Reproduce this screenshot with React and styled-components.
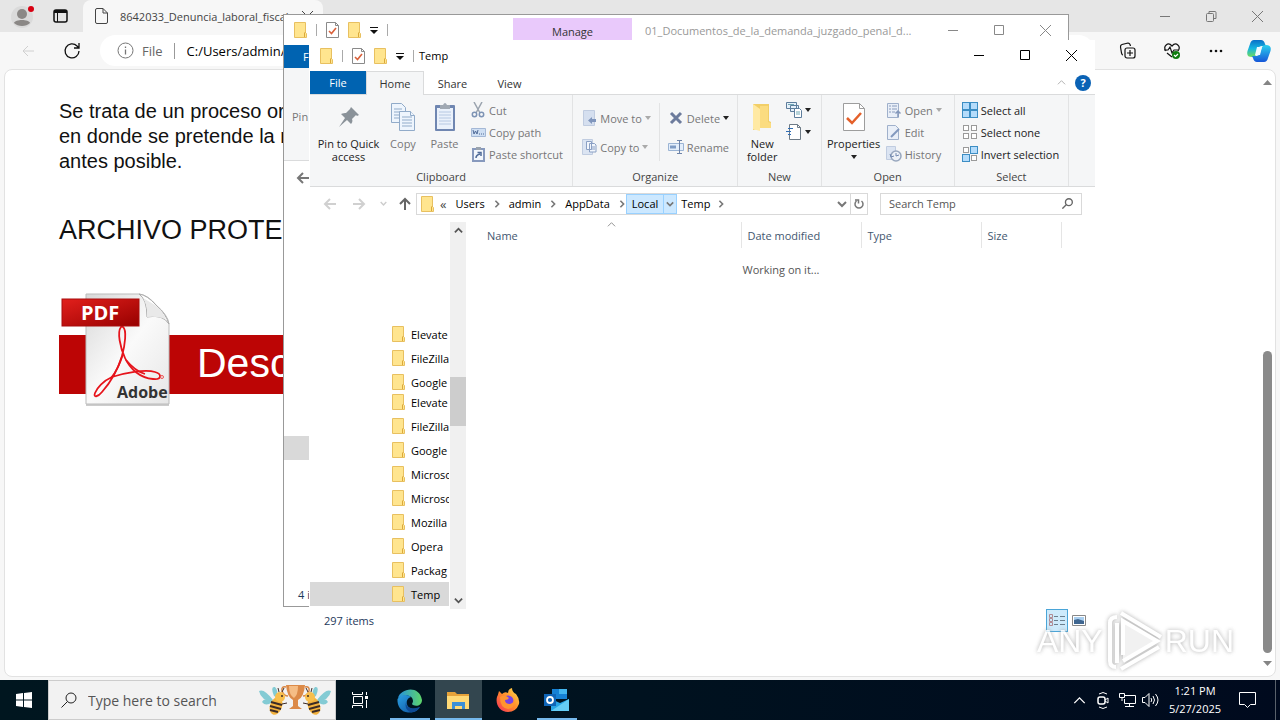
import React from 'react';
import styled, { createGlobalStyle } from 'styled-components';

const GlobalStyle = createGlobalStyle`
  * {
    box-sizing: border-box;
  }
  body {
    margin: 0;
    font-family: 'Open Sans', 'Noto Sans', sans-serif;
    font-size: 11px;
    color: #000;
  }
  button,
  input {
    font: inherit;
    color: inherit;
    border: none;
    background: none;
    margin: 0;
    padding: 0;
    outline: none;
  }
  svg {
    display: block;
    flex-shrink: 0;
  }
`;

// Small shared icons
const FolderIcon = ({ width = 13, height = 16 }) => (
  <svg width={width} height={height} viewBox="0 0 13 16" preserveAspectRatio="none">
    <path d="M.5.5h11v10l1 1v4h-12z" fill="#ffe58f" stroke="#e8c060" />
    <path d="M10.5 15v-4l1-1" fill="none" stroke="#dba93a" />
  </svg>
);

const CheckPageIcon = () => (
  <svg width="13" height="16" viewBox="0 0 13 16" fill="none">
    <path d="M.5.5h9l3 3v12H.5z" fill="#fff" stroke="#8a8a8a" />
    <path d="M9.5.5v3h3" stroke="#8a8a8a" />
    <path d="M3 9l2.500 2.500L10 6" stroke="#d9603a" strokeWidth="1.600" />
  </svg>
);

const DropIcon = ({ color = '#222' }) => (
  <svg width="6" height="4" viewBox="0 0 6 4">
    <path d="M0 0h6L3 4z" fill={color} />
  </svg>
);

const CustomizeIcon = () => (
  <svg width="8" height="8" viewBox="0 0 8 8">
    <path d="M0 1h8v1H0zM0 4h8L4 8z" fill="#111" />
  </svg>
);

const Chevron = ({ dir = 'down', color = '#555', size = 9, weight = 2 }) => {
  const paths = {
    down: 'M1 3l4 4 4-4',
    up: 'M1 7l4-4 4 4',
    right: 'M3 1l4 4-4 4',
  };
  return (
    <svg width={size} height={size} viewBox="0 0 10 10" fill="none">
      <path d={paths[dir]} stroke={color} strokeWidth={weight} />
    </svg>
  );
};

const Arrow = ({ turn = 0, color = '#d0d0d0', weight = 2 }) => (
  <svg width="14" height="14" viewBox="0 0 14 14" fill="none">
    <path
      d="M13 7H2M7 2L2 7l5 5"
      transform={`rotate(${turn} 7 7)`}
      stroke={color}
      strokeWidth={weight}
    />
  </svg>
);

const MinIcon = () => (
  <svg width="11" height="11" viewBox="0 0 11 11">
    <path d="M0 5.500h10" stroke="currentColor" />
  </svg>
);
const MaxIcon = () => (
  <svg width="11" height="11" viewBox="0 0 11 11">
    <path d="M.5.5h9v9h-9z" fill="none" stroke="currentColor" />
  </svg>
);
const RestoreIcon = () => (
  <svg width="11" height="11" viewBox="0 0 11 11" fill="none" stroke="currentColor">
    <rect x=".5" y="2.500" width="7" height="8" rx="1" />
    <path d="M3 2.500V.5h6q1 0 1 1v6H8" />
  </svg>
);
const CloseIcon = () => (
  <svg width="11" height="11" viewBox="0 0 11 11">
    <path d="M0 0l11 11M11 0L0 11" stroke="currentColor" />
  </svg>
);
const MagnifierIcon = ({ size, weight = 1 }) => (
  <svg width={size} height={size} viewBox="0 0 16 16" fill="none" stroke="currentColor" strokeWidth={weight}>
    <circle cx="10" cy="6" r="5" />
    <path d="M6.500 9.500L.5 15.500" />
  </svg>
);

// Browser icons
const ProfileIcon = () => (
  <svg width="26" height="26" viewBox="0 0 26 26">
    <circle cx="13" cy="14" r="11" fill="#dadada" />
    <circle cx="13" cy="11" r="5" fill="#8b8886" />
    <path d="M5 20c1-4 15-4 16 0-4 4-12 4-16 0z" fill="#8b8886" />
    <circle cx="22" cy="6" r="3" fill="#d80012" />
  </svg>
);
const WorkspaceIcon = () => (
  <svg width="15" height="14" viewBox="0 0 15 14" fill="none" stroke="#111">
    <rect x="1" y="1" width="13" height="12" rx="2" strokeWidth="1.500" />
    <path d="M1 2.500h13" strokeWidth="3" />
    <path d="M4.500 3v10" />
  </svg>
);
const PageIcon = () => (
  <svg width="13" height="16" viewBox="0 0 13 16" fill="none" stroke="#444">
    <path d="M2 .5h6l4.500 4.500v9q0 1.500-1.500 1.500H2Q.5 15.500.5 14V2Q.5.5 2 .5zM8 .5V5h4.500" />
  </svg>
);
const RefreshIcon = () => (
  <svg width="18" height="18" viewBox="0 0 18 18" fill="none" stroke="#111" strokeWidth="1.300">
    <path d="M16 9a7 7 0 1 1-2-5l2 2M16 1v5h-5" />
  </svg>
);
const InfoIcon = () => (
  <svg width="17" height="17" viewBox="0 0 17 17" fill="none" stroke="#777">
    <circle cx="8.500" cy="8.500" r="7.500" />
    <path d="M8.500 7.500v5M8.500 4.500V6" strokeWidth="1.300" />
  </svg>
);
const CollectionsIcon = () => (
  <svg width="18" height="18" viewBox="0 0 18 18" fill="none" stroke="#111" strokeWidth="1.200">
    <rect x="6" y="6" width="10" height="10" rx="2" />
    <path d="M11 8v6M8 11h6M4 13q-1 0-1.500-2L1.500 5Q1.300 3 3 2.500L9 1q2 0 2.500 3" />
  </svg>
);
const HealthIcon = () => (
  <svg width="18" height="18" viewBox="0 0 18 18" fill="none" stroke="#111" strokeWidth="1.200">
    <path d="M3 9C-.5 4 5-.5 9 4c4-4.500 9.500 0 6 5M4 11l5 4M1 8h4l2-3 2 6 2-3h5" />
    <circle cx="13" cy="13" r="4" fill="#107c10" stroke="none" />
    <path d="M11 13l1.500 1.500L15 12" stroke="#fff" />
  </svg>
);
const MoreIcon = () => (
  <svg width="14" height="4" viewBox="0 0 14 4" fill="#111">
    <circle cx="2" cy="2" r="1.300" />
    <circle cx="7" cy="2" r="1.300" />
    <circle cx="12" cy="2" r="1.300" />
  </svg>
);
const CopilotIcon = () => (
  <svg width="24" height="22" viewBox="0 0 24 22">
    <defs>
      <linearGradient id="copA" x1="0" y1="0" x2="0" y2="1">
        <stop offset="0" stopColor="#0a6fc8" />
        <stop offset=".5" stopColor="#16b5e0" />
        <stop offset="1" stopColor="#6fdc5c" />
      </linearGradient>
      <linearGradient id="copB" x1="0" y1="0" x2="0" y2="1">
        <stop offset="0" stopColor="#2ad0ee" />
        <stop offset="1" stopColor="#1556d8" />
      </linearGradient>
    </defs>
    <path d="M7 0h7q3 0 4 4l1 2h-4q-3 0-4 3l-2 6q-1 2-4 2-6 0-4.500-6L3 4q1-4 4-4z" fill="url(#copA)" />
    <path d="M17 22h-7q-3 0-4-4l-1-2h4q3 0 4-3l2-6q1-2 4-2 6 0 4.500 6L21 18q-1 4-4 4z" fill="url(#copB)" />
    <path d="M10 7h5l-2 8H8z" fill="#eefaff" />
  </svg>
);

const PdfArt = () => (
  <svg width="114" height="114" viewBox="0 0 114 114">
    <defs>
      <linearGradient id="sheet" x1="0" y1="0" x2="1" y2="1">
        <stop offset="0" stopColor="#d8d8d8" />
        <stop offset=".5" stopColor="#fafafa" />
        <stop offset="1" stopColor="#e6e6e6" />
      </linearGradient>
      <linearGradient id="label" x1="0" y1="0" x2="1" y2="1">
        <stop offset="0" stopColor="#e2201c" />
        <stop offset="1" stopColor="#970000" />
      </linearGradient>
    </defs>
    <path d="M27 3h53q10 0 19 12 11 10 11 20v79H27z" fill="#999" opacity=".5" />
    <path d="M27 2h53q9 1 17 11 12 10 13 19v80H27z" fill="url(#sheet)" stroke="#bbb" />
    <path d="M80 2q8 5 8 23 16-3 22 7-3-10-13-19Q88 3 80 2z" fill="#fff" stroke="#aaa" />
    <path d="M84 6q5 8 4 19 14-1 19 3-2-8-11-15" fill="#e9e9e9" />
    <g fill="none" stroke="#e6141c" strokeWidth="1.800">
      <path d="M62 35c-4 5-1 20 4 31s15 20 28 21c9 1 9-5 2-7-10-3-31 1-43 5-9 4-15 11-17 16-2 5 3 4 7-1 8-9 16-23 20-36 3-11 5-26 1-29q-1-1-2 0z" />
      <path d="M64 62q-5 16-12 24M67 68q9 11 19 14" />
    </g>
    <rect x="3" y="7" width="77" height="27" fill="url(#label)" stroke="#a80c0c" />
    <text x="22" y="28" fill="#fff" fontFamily="Open Sans" fontWeight="700" fontSize="20">PDF</text>
    <text x="58" y="106" fill="#333" fontFamily="Open Sans" fontWeight="700" fontSize="16">Adobe</text>
    <circle cx="103" cy="85" r="1.500" fill="none" stroke="#e55" />
  </svg>
);

// Ribbon icons
const PinIcon = () => (
  <svg width="22" height="22" viewBox="0 0 22 22" fill="#8a9299">
    <path d="M13 1l8 8-2 1-1-1-4 4c1 2 0 4-1 5l-4-4-8 7 6-9-4-4c2-1 4-1 5-1l4-4z" />
  </svg>
);
const CopyIcon = ({ size = 28 }) => (
  <svg width={size} height={size} viewBox="0 0 28 28" fill="#eef5fd" stroke="#91abc9">
    <path d="M2.500.5h10l4 4v15h-14z" />
    <path d="M5 6h8M5 9h8M5 12h8M5 15h8" />
    <path d="M10.500 8.500h11l4 4v15h-15z" />
    <path d="M21.500 8.500v4h4M13 14h10M13 17h10M13 20h10M13 23h10" />
  </svg>
);
const CopyToIcon = () => (
  <svg width="15" height="16" viewBox="0 0 15 16">
    <path d="M.5.5h10v15H.5z" fill="#dbe4f2" stroke="#c0cce0" />
    <path d="M4.500 2.500h5v8h-5zM7.500 4.500h5l1.500 1.500v7H7.500z" fill="#f2f6fc" stroke="#8ba0c4" />
    <path d="M9 8h4M9 10h4" stroke="#8ba0c4" />
  </svg>
);
const PasteIcon = () => (
  <svg width="22" height="30" viewBox="0 0 22 30">
    <rect x="1" y="3" width="20" height="26" rx="1" fill="#6f86b1" />
    <path d="M3 6h16v21H3z" fill="#eaf1fb" />
    <path d="M5 10h12M5 13h12M5 16h12M5 19h12M5 22h12" stroke="#b6c8e2" />
    <path d="M6 3h3q2-4 4 0h3v4H6z" fill="#a0a8b2" />
  </svg>
);
const CutIcon = () => (
  <svg width="14" height="16" viewBox="0 0 14 16" fill="none" stroke="#7d93b4" strokeWidth="1.500">
    <path d="M3 0l6 11M11 0L5 11" stroke="#9aa3ae" />
    <circle cx="3.500" cy="12.500" r="2.200" />
    <circle cx="10.500" cy="12.500" r="2.200" />
  </svg>
);
const CopyPathIcon = () => (
  <svg width="15" height="9" viewBox="0 0 15 9" fill="none">
    <path d="M.5.5h14v8H.5z" fill="#cfdff3" stroke="#a4b8d6" />
    <path d="M2 2l1 4 1.500-3L6 6l1-4M8 6h1M10 6h1M12 6h1" stroke="#4f6a97" />
  </svg>
);
const ShortcutIcon = () => (
  <svg width="13" height="15" viewBox="0 0 13 15" fill="none">
    <path d="M1 2h11v12H1z" fill="#f2f6fc" stroke="#8799bd" strokeWidth="2" />
    <path d="M4 0h5v3H4z" fill="#9aa3ae" />
    <path d="M4 11q0-3 4-4M5.500 5.500H9V9" stroke="#4f6a97" strokeWidth="1.500" />
  </svg>
);
const MoveIcon = () => (
  <svg width="13" height="16" viewBox="0 0 13 16">
    <path d="M.5.5h11v15H.5z" fill="#d5dfef" stroke="#c0cce0" />
    <path d="M13 9v3H9v2l-4-3.500L9 7v2z" fill="#8096bd" />
  </svg>
);
const DeleteIcon = () => (
  <svg width="14" height="14" viewBox="0 0 14 14">
    <path d="M2 2l10 10M12 2L2 12" stroke="#6c7b9c" strokeWidth="3" />
  </svg>
);
const RenameIcon = () => (
  <svg width="16" height="14" viewBox="0 0 16 14" fill="none">
    <path d="M.5 3.500h15v7H.5z" fill="#e3eefb" stroke="#9bb4d4" />
    <path d="M2 5.500h6v3H2z" fill="#7f9cc5" />
    <path d="M9 .5h5M9 13.500h5M11.500 0v14" stroke="#6d83a8" />
  </svg>
);
const BigFolderIcon = () => (
  <svg width="20" height="28" viewBox="0 0 20 28">
    <path d="M1 1h16v17l2 1v6H8L1 27z" fill="#f2cf68" />
    <path d="M1 1l7 5v22L1 26z" fill="#ffe9a3" />
    <path d="M8 3h8v16l3 1v5H8z" fill="#fbdc80" />
  </svg>
);
const NewItemIcon = () => (
  <svg width="16" height="16" viewBox="0 0 16 16" fill="#e6f1fa" stroke="#5d7d9c">
    <path d="M.5.5h10v6H.5zM4.500 3.500h8v6h-8z" />
    <path d="M8.500 6.500h5l2 2v7h-7z" fill="#fff" />
    <path d="M10 10h4M10 12h4M2 2.500h6" stroke="#6fa7b4" />
  </svg>
);
const EasyAccessIcon = () => (
  <svg width="16" height="16" viewBox="0 0 16 16" fill="none" stroke="#6d7a86">
    <path d="M3.500.5h8l3 3v12h-11z" fill="#fff" />
    <path d="M11.500.5v3h3" />
    <path d="M2 4.500h5M0 7.500h5M2 10.500h3" stroke="#2f6db5" strokeWidth="1.200" />
  </svg>
);
const PropertiesIcon = () => (
  <svg width="22" height="28" viewBox="0 0 22 28" fill="none">
    <path d="M.5.5h16l5 5v22H.5z" fill="#fff" stroke="#9d9d9d" />
    <path d="M16.500.5v5h5" stroke="#9d9d9d" />
    <path d="M4 15l5 5L18 10" stroke="#e4602a" strokeWidth="2.500" />
  </svg>
);
const OpenIcon = () => (
  <svg width="14" height="15" viewBox="0 0 14 15" fill="none">
    <path d="M.5.5h11v14H.5z" fill="#e9eff8" stroke="#9fb0cb" />
    <path d="M2 3h2M2 6h2M2 9h2M5 3h5M5 6h5M5 9h3" stroke="#8a9cbd" />
    <path d="M11 14V8M8.500 10.500L11 8l2.500 2.500" stroke="#8498bb" strokeWidth="1.500" />
  </svg>
);
const EditIcon = () => (
  <svg width="13" height="15" viewBox="0 0 13 15" fill="none">
    <path d="M.5.5h8l3 3v11H.5z" fill="#e9eff8" stroke="#9fb0cb" />
    <path d="M4 12l8-8" stroke="#8298be" strokeWidth="2" />
  </svg>
);
const HistoryIcon = () => (
  <svg width="16" height="16" viewBox="0 0 16 16" fill="none">
    <path d="M.5.5h9v13h-9z" fill="#dbe4f2" stroke="#c0cce0" />
    <circle cx="10" cy="10" r="5" fill="#edf1f7" stroke="#98a7be" strokeWidth="1.500" />
    <path d="M10 7v3l3-1M4 8l1 3 3-1" stroke="#7188b0" />
  </svg>
);
const squares = [[0, 0], [8, 0], [0, 8], [8, 8]];
const SelectIcon = ({ on = [] }) => (
  <svg width="16" height="16" viewBox="0 0 16 16">
    {squares.map(([x, y], i) =>
      on.includes(i) ? (
        <rect key={i} x={x + 0.5} y={y + 0.5} width="7" height="7" fill="#b5dcfb" stroke="#3d8ec4" />
      ) : (
        <rect key={i} x={x + 1.5} y={y + 1.5} width="5" height="5" fill="#fff" stroke="#9a9a9a" />
      )
    )}
  </svg>
);

// Taskbar icons
const StartIcon = () => (
  <svg width="16" height="16" viewBox="0 0 16 16" fill="#fff">
    <path d="M0 2l7-1v6.500H0zM8 1l8-1v7.500H8zM0 8.500h7V15l-7-1zM8 8.500h8V16l-8-1z" />
  </svg>
);
const BeesIcon = () => (
  <svg width="72" height="32" viewBox="0 0 72 32">
    <path d="M27 1h19q-1 12-7 15v6l4 3H30l4-3v-6q-6-3-7-15z" fill="#dc8a48" />
    <path d="M30 2h9q0 9-4 12-5-3-5-12z" fill="#f5bd85" />
    <path d="M27 3q-5-1-4 4 2 5 6 5M46 3q5-1 4 4-2 5-6 5" fill="none" stroke="#d98745" strokeWidth="1.500" />
    {[false, true].map((flip) => (
      <g key={String(flip)} transform={flip ? 'translate(72) scale(-1 1)' : undefined}>
        <path d="M14 16Q5 4 0 7q2 10 14 10zM13 17Q5 13 3 18q4 5 10 0zM15 12Q11 2 16 3q4 4 1 10z" fill="#83cbd4" />
        <ellipse cx="17" cy="22" rx="6" ry="9" transform="rotate(20 17 22)" fill="#f3b23d" />
        <path d="M12 18l11 3M11 22l11 3M11 26l8 2" stroke="#3c2b25" strokeWidth="2" />
        <circle cx="21" cy="13" r="5" fill="#f8bf4d" />
        <circle cx="23" cy="12" r="1" fill="#3c2b25" />
        <path d="M20 8l-1-4M23 8l2-4M23 20l5-1" stroke="#3c2b25" />
      </g>
    ))}
  </svg>
);
const TaskViewIcon = () => (
  <svg width="17" height="16" viewBox="0 0 17 16" fill="none" stroke="#fff">
    <path d="M.5 0v2.500h10V0M.5 16v-2.500h10V16M1.500 4.500h9v7h-9zM14.500 0v3M14.500 8v8" />
    <path d="M13 4h3v3h-3z" fill="#fff" stroke="none" />
  </svg>
);
const EdgeIcon = () => (
  <svg width="25" height="25" viewBox="0 0 25 25">
    <defs>
      <linearGradient id="edgeTop" x1="0" x2="1">
        <stop offset="0" stopColor="#2591dc" />
        <stop offset="1" stopColor="#5ed66a" />
      </linearGradient>
      <linearGradient id="edgeLow" x1="0" x2="1" y2="1">
        <stop offset="0" stopColor="#2ba0e2" />
        <stop offset="1" stopColor="#0c4f9c" />
      </linearGradient>
    </defs>
    <path d="M1 10C3 1 22-4 25 12c0 5-5 7-9 5-2-1 0-2 0-4 0-5-6-8-15-3z" fill="url(#edgeTop)" />
    <path d="M.5 11C4 6 11 6 14 9c-5 1-6 8-1 11 4 2 7 1 10-1-3 5-8 6-12 5.500C4 24 0 18 .5 11z" fill="url(#edgeLow)" />
    <path d="M9 14q0 9 14 5-4 6-10 5-6-3-4-10z" fill="#0e4a94" />
  </svg>
);
const ExplorerIcon = () => (
  <svg width="23" height="19" viewBox="0 0 23 19">
    <path d="M0 1h8l2 2h12v15H0z" fill="#e6a23a" />
    <path d="M0 5h22v13H0z" fill="#ffd976" />
    <path d="M5 11h13v7h-3v-3H8v3H5z" fill="#3b8fd6" />
  </svg>
);
const FirefoxIcon = () => (
  <svg width="24" height="24" viewBox="0 0 24 24">
    <defs>
      <linearGradient id="fox" x1="1" y1="0" x2="0" y2="1">
        <stop offset="0" stopColor="#ffe14d" />
        <stop offset=".5" stopColor="#ff8a2b" />
        <stop offset="1" stopColor="#f52a5d" />
      </linearGradient>
    </defs>
    <path d="M3 3l3 3q3-3 6-1 0-4 4-5 0 4 4 6 4 5 3 10-3 8-11 8C4 24-1 16 1 9q1-2 2-6z" fill="url(#fox)" />
    <circle cx="12" cy="13" r="5.500" fill="#7542e5" />
    <path d="M4 9q5-3 9 1-1 2-4 2 0 4 5 4 4-1 4-5 2 9-6 10-8-1-8-12z" fill="#ff9430" />
  </svg>
);
const OutlookIcon = () => (
  <svg width="25" height="22" viewBox="0 0 25 22">
    <path d="M8 0h15v10H8z" fill="#1681d4" />
    <path d="M15 0h8v5h-8z" fill="#43b5ee" />
    <path d="M7 10l9 4 9-4v12H7z" fill="#28a5e5" />
    <path d="M7 22l18-12v12z" fill="#65cdf5" />
    <path d="M0 5h12v12H0z" fill="#0f65b7" />
    <circle cx="6" cy="11" r="3" fill="none" stroke="#fff" strokeWidth="1.800" />
  </svg>
);
const MeetIcon = () => (
  <svg width="12" height="17" viewBox="0 0 12 17" fill="none" stroke="#fff">
    <rect x="1" y="5" width="7" height="7" rx="2" strokeWidth="1.500" />
    <path d="M8 8l3-2v5L8 9M2 2q4-3 8 0M2 15q4 3 8 0" />
  </svg>
);
const NetworkIcon = () => (
  <svg width="17" height="14" viewBox="0 0 17 14" fill="none" stroke="#fff">
    <path d="M5 2.500h11.500v8h-11V6M.5.5h5v4h-5zM3 5v3M10.500 11v2.500M6 13.500h9" />
  </svg>
);
const VolumeIcon = () => (
  <svg width="18" height="14" viewBox="0 0 18 14" fill="none" stroke="#fff">
    <path d="M.5 4.500H3l4-4v13l-4-4H.5zM9 5q1.500 2 0 4M11 3q3 4 0 8M13.500 1q5 6 0 12" />
  </svg>
);
const NoticeIcon = () => (
  <svg width="17" height="16" viewBox="0 0 17 16" fill="none" stroke="#fff">
    <path d="M.5.5h16v12h-5l-3 3-3-3h-5z" />
  </svg>
);

const WindowControls = ({ restore, ...rest }) => (
  <Controls {...rest}>
    <ControlButton aria-label="Minimize"><MinIcon /></ControlButton>
    <ControlButton aria-label="Maximize">{restore ? <RestoreIcon /> : <MaxIcon />}</ControlButton>
    <ControlButton aria-label="Close"><CloseIcon /></ControlButton>
  </Controls>
);

const QuickAccess = () => (
  <QuickBar>
    <FolderIcon />
    <QuickLine />
    <QuickButton aria-label="Properties"><CheckPageIcon /></QuickButton>
    <QuickButton aria-label="New folder"><FolderIcon /></QuickButton>
    <QuickButton aria-label="Customize"><CustomizeIcon /></QuickButton>
    <QuickLine />
  </QuickBar>
);

const Small = ({ icon, children, drop, dim, dropColor = '#aaa' }) => (
  <SmallButton $dim={dim}>
    <SmallGlyph>{icon}</SmallGlyph>
    {children}
    {drop && <DropIcon color={dropColor} />}
  </SmallButton>
);

function Browser() {
  return (
    <BrowserFrame>
      <TabStrip>
        <StripButton aria-label="Profile"><ProfileIcon /></StripButton>
        <StripButton aria-label="Workspaces"><WorkspaceIcon /></StripButton>
        <Tab>
          <PageIcon />
          <TabTitle>8642033_Denuncia_laboral_fiscal</TabTitle>
          <CloseIcon />
        </Tab>
        <WindowControls restore $color="#777" />
      </TabStrip>
      <Toolbar>
        <ToolButton aria-label="Back"><Arrow weight={1} /></ToolButton>
        <ToolButton aria-label="Refresh"><RefreshIcon /></ToolButton>
        <AddressPill>
          <InfoIcon />
          <Scheme>File</Scheme>
          <AddressInput aria-label="Address" defaultValue="C:/Users/admin/" />
        </AddressPill>
        <ToolButton aria-label="Collections"><CollectionsIcon /></ToolButton>
        <ToolButton aria-label="Browser essentials"><HealthIcon /></ToolButton>
        <ToolButton aria-label="More"><MoreIcon /></ToolButton>
        <ToolButton aria-label="Copilot"><CopilotIcon /></ToolButton>
      </Toolbar>
      <PageCard>
        <Article>
          <Paragraph>
            Se trata de un proceso or<br />
            en donde se pretende la r<br />
            antes posible.
          </Paragraph>
          <Heading>ARCHIVO PROTE</Heading>
          <Banner href="#">
            <PdfArt />
            <span>Desc</span>
          </Banner>
        </Article>
        <PageScroll>
          <svg width="9" height="5" viewBox="0 0 9 5"><path d="M0 5h9L4.500 0z" fill="#858585" /></svg>
          <PageThumb />
          <svg width="9" height="5" viewBox="0 0 9 5"><path d="M0 0h9L4.500 5z" fill="#858585" /></svg>
        </PageScroll>
      </PageCard>
    </BrowserFrame>
  );
}

function BackWindow() {
  return (
    <BackFrame>
      <BackTitle>
        <QuickAccess />
        <ManageTab>Manage</ManageTab>
        <BackCaption>01_Documentos_de_la_demanda_juzgado_penal_d...</BackCaption>
        <WindowControls $color="#888" />
      </BackTitle>
      <BackFileTab>F</BackFileTab>
      <BackRibbon>Pin</BackRibbon>
      <BackNav><Arrow color="#777" /></BackNav>
      <BackBody><BackSelected /></BackBody>
      <BackStatus>4 i</BackStatus>
    </BackFrame>
  );
}

function Ribbon() {
  return (
    <RibbonBar>
      <Group $grow={264}>
        <GroupBody>
          <BigButton $width={77}><BigGlyph><PinIcon /></BigGlyph>Pin to Quick<br />access</BigButton>
          <BigButton $width={32} $dim><BigGlyph><CopyIcon /></BigGlyph>Copy</BigButton>
          <BigButton $width={51} $dim><BigGlyph><PasteIcon /></BigGlyph>Paste</BigButton>
          <Stack>
            <Small dim icon={<CutIcon />}>Cut</Small>
            <Small dim icon={<CopyPathIcon />}>Copy path</Small>
            <Small dim icon={<ShortcutIcon />}>Paste shortcut</Small>
          </Stack>
        </GroupBody>
        <GroupLabel>Clipboard</GroupLabel>
      </Group>
      <Group $grow={165}>
        <GroupBody $inset={8}>
          <Stack $tall>
            <Small dim drop icon={<MoveIcon />}>Move to</Small>
            <Small dim drop icon={<CopyToIcon />}>Copy to</Small>
          </Stack>
          <InnerLine />
          <Stack $tall>
            <Small dim drop dropColor="#222" icon={<DeleteIcon />}>Delete</Small>
            <Small dim icon={<RenameIcon />}>Rename</Small>
          </Stack>
        </GroupBody>
        <GroupLabel>Organize</GroupLabel>
      </Group>
      <Group $grow={83}>
        <GroupBody>
          <BigButton $width={48}><BigGlyph><BigFolderIcon /></BigGlyph>New<br />folder</BigButton>
          <Stack>
            <SmallButton aria-label="New item"><NewItemIcon /><DropIcon /></SmallButton>
            <SmallButton aria-label="Easy access"><EasyAccessIcon /><DropIcon /></SmallButton>
          </Stack>
        </GroupBody>
        <GroupLabel>New</GroupLabel>
      </Group>
      <Group $grow={133}>
        <GroupBody>
          <BigButton $width={64}><BigGlyph><PropertiesIcon /></BigGlyph>Properties<DropRow><DropIcon /></DropRow></BigButton>
          <Stack>
            <Small dim drop icon={<OpenIcon />}>Open</Small>
            <Small dim icon={<EditIcon />}>Edit</Small>
            <Small dim icon={<HistoryIcon />}>History</Small>
          </Stack>
        </GroupBody>
        <GroupLabel>Open</GroupLabel>
      </Group>
      <Group $grow={114}>
        <GroupBody $inset={7}>
          <Stack>
            <Small icon={<SelectIcon on={[0, 1, 2, 3]} />}>Select all</Small>
            <Small icon={<SelectIcon />}>Select none</Small>
            <Small icon={<SelectIcon on={[1, 2]} />}>Invert selection</Small>
          </Stack>
        </GroupBody>
        <GroupLabel>Select</GroupLabel>
      </Group>
    </RibbonBar>
  );
}

const folders = ['Elevate', 'FileZilla', 'Google', 'Microso', 'Microso', 'Mozilla', 'Opera', 'Packag', 'Temp'];

const FolderRow = ({ name }) => (
  <TreeItem $active={name === 'Temp'}>
    <FolderIcon />
    {name}
  </TreeItem>
);

function FrontWindow() {
  return (
    <FrontFrame>
      <FrontTitle>
        <QuickAccess />
        <FrontCaption>Temp</FrontCaption>
        <WindowControls $color="#000" />
      </FrontTitle>
      <RibbonTabs>
        <FileTab>File</FileTab>
        <RibbonTab $active>Home</RibbonTab>
        <RibbonTab>Share</RibbonTab>
        <RibbonTab>View</RibbonTab>
        <TabTools>
          <Chevron dir="up" color="#aaa" weight={1} />
          <HelpButton aria-label="Help">?</HelpButton>
        </TabTools>
      </RibbonTabs>
      <Ribbon />
      <AddressRow>
        <NavButton aria-label="Back"><Arrow /></NavButton>
        <NavButton aria-label="Forward"><Arrow turn={180} /></NavButton>
        <NavButton aria-label="Recent" $narrow><Chevron color="#ccc" size={7} /></NavButton>
        <NavButton aria-label="Up" $narrow><Arrow turn={90} color="#666" /></NavButton>
        <PathBox>
          <FolderIcon />
          <Guillemet>«</Guillemet>
          <Crumb>Users</Crumb>
          <Chevron dir="right" color="#777" size={8} />
          <Crumb>admin</Crumb>
          <Chevron dir="right" color="#777" size={8} />
          <Crumb>AppData</Crumb>
          <Chevron dir="right" color="#777" size={8} />
          <LocalCrumb>
            <span>Local</span>
            <i><Chevron color="#777" size={8} /></i>
          </LocalCrumb>
          <TempCrumb>Temp</TempCrumb>
          <Chevron dir="right" color="#777" size={8} />
          <PathEnd>
            <Chevron color="#777" size={10} />
            <RefreshCell aria-label="Refresh">
              <svg width="12" height="12" viewBox="0 0 12 12" fill="none" stroke="#777" strokeWidth="1.500">
                <path d="M3.500 3a4 4 0 1 0 5 0M2 2h3.500v3.500" />
              </svg>
            </RefreshCell>
          </PathEnd>
        </PathBox>
        <SearchBox>
          <SearchInput aria-label="Search" placeholder="Search Temp" />
          <MagnifierIcon size={11} weight={2} />
        </SearchBox>
      </AddressRow>
      <Panes>
        <Tree>
          <TreeTop>
            {folders.slice(0, 3).map((name) => <FolderRow key={name} name={name} />)}
          </TreeTop>
          {folders.map((name, i) => <FolderRow key={i} name={name} />)}
        </Tree>
        <TreeScroll>
          <Chevron dir="up" />
          <TreeThumb />
          <Chevron />
        </TreeScroll>
        <Listing>
          <Files>
            <thead>
              <tr>
                <NameHead><HeadMark><Chevron dir="up" color="#888" weight={1} /></HeadMark>Name</NameHead>
                <Head $width={120}>Date modified</Head>
                <Head $width={120}>Type</Head>
                <Head $width={80}>Size</Head>
                <Spacer />
              </tr>
            </thead>
            <tbody>
              <tr><Working colSpan={5}>Working on it...</Working></tr>
            </tbody>
          </Files>
        </Listing>
      </Panes>
      <StatusBar>
        297 items
        <Views>
          <ViewButton $active aria-label="Details">
            <svg width="18" height="13" viewBox="0 0 18 13" fill="none">
              <path d="M1.500.5h3v3h-3zM1.500 4.500h3v3h-3zM1.500 8.500h3v3h-3z" stroke="#b08a92" />
              <path d="M6 2.500h4M6 6.500h4M6 10.500h4M12 2.500h5M12 6.500h5M12 10.500h5" stroke="#6b7f8e" />
            </svg>
          </ViewButton>
          <ViewButton aria-label="Large icons">
            <svg width="14" height="11" viewBox="0 0 14 11">
              <path d="M.5.5h13v10H.5z" fill="#fff" stroke="#888" />
              <path d="M2 2h10v4H2z" fill="#a9cff0" />
              <path d="M2 5l4-1 6 2v3H2z" fill="#3f6690" />
            </svg>
          </ViewButton>
        </Views>
      </StatusBar>
    </FrontFrame>
  );
}

function Watermark() {
  return (
    <Mark>
      <span>ANY</span>
      <svg width="62" height="64" viewBox="0 0 62 64" fill="none" stroke="#fff" strokeWidth="4">
        <path d="M20 12l34 20-34 20z" fill="#eee" stroke="none" />
        <path d="M14 8q-7 0-7 6v38q0 6 6 6M14 14v40M20 46V12l34 20-34 20M18 4l40 24M18 60l38-22" />
      </svg>
      <span>RUN</span>
    </Mark>
  );
}

function Taskbar() {
  return (
    <Bar>
      <StartButton aria-label="Start"><StartIcon /></StartButton>
      <TaskSearch>
        <MagnifierIcon size={16} />
        <SearchInput aria-label="Type here to search" placeholder="Type here to search" />
        <BeesIcon />
      </TaskSearch>
      <TaskButton aria-label="Task view"><TaskViewIcon /></TaskButton>
      <TaskButton aria-label="Edge" $line={40}><EdgeIcon /></TaskButton>
      <TaskButton aria-label="File Explorer" $line={47} $active><ExplorerIcon /></TaskButton>
      <TaskButton aria-label="Firefox"><FirefoxIcon /></TaskButton>
      <TaskButton aria-label="Outlook" $line={40}><OutlookIcon /></TaskButton>
      <Tray>
        <TrayButton aria-label="Hidden icons"><Chevron dir="up" color="#fff" size={13} weight={1} /></TrayButton>
        <TrayButton aria-label="Meet now"><MeetIcon /></TrayButton>
        <TrayButton aria-label="Network"><NetworkIcon /></TrayButton>
        <TrayButton aria-label="Volume"><VolumeIcon /></TrayButton>
        <Clock>1:21 PM<br />5/27/2025</Clock>
        <NoticeButton aria-label="Notifications"><NoticeIcon /></NoticeButton>
        <ShowDesktop aria-label="Show desktop" />
      </Tray>
    </Bar>
  );
}

function App() {
  return (
    <Desktop>
      <GlobalStyle />
      <Browser />
      <BackWindow />
      <FrontWindow />
      <Watermark />
      <Taskbar />
    </Desktop>
  );
}

export default App;

// Styling
const Desktop = styled.div`
  position: relative;
  display: flex;
  flex-direction: column;
  min-height: 100vh;
  overflow: hidden;
`;

// Browser
const BrowserFrame = styled.main`
  flex: 1;
  display: flex;
  flex-direction: column;
  background: #f7f7f7;
`;
const TabStrip = styled.div`
  display: flex;
  align-items: center;
  height: 32px;
  padding-left: 3px;
  background: #e6e6e6;
`;
const StripButton = styled.button`
  display: flex;
  align-items: center;
  justify-content: center;
  width: 38px;
  height: 32px;
`;
const Tab = styled.div`
  display: flex;
  align-items: center;
  gap: 12px;
  width: 240px;
  height: 32px;
  margin-left: 4px;
  padding: 0 10px 0 12px;
  border-radius: 8px 8px 0 0;
  background: #f7f7f7;
  color: #444;
`;
const TabTitle = styled.span`
  flex: 1;
  overflow: hidden;
  white-space: nowrap;
`;
const Controls = styled.div`
  display: flex;
  margin-left: auto;
  color: ${(p) => p.$color};
`;
const ControlButton = styled.button`
  display: flex;
  align-items: center;
  justify-content: center;
  width: 46px;
  height: 30px;
`;
const Toolbar = styled.div`
  display: flex;
  align-items: center;
  height: 37px;
  padding-left: 6px;
`;
const ToolButton = styled.button`
  display: flex;
  align-items: center;
  justify-content: center;
  width: 44px;
  height: 30px;
  &:last-child {
    width: 42px;
  }
`;
const AddressPill = styled.div`
  flex: 1;
  display: flex;
  align-items: center;
  gap: 8px;
  height: 31px;
  margin: 0 12px 0 6px;
  padding-left: 17px;
  border-radius: 16px;
  background: #fff;
  font-size: 13px;
`;
const Scheme = styled.span`
  padding-right: 11px;
  border-right: 1px solid #999;
  line-height: 16px;
  color: #666;
`;
const AddressInput = styled.input`
  flex: 1;
  padding-left: 4px;
`;
const PageCard = styled.section`
  flex: 1;
  display: flex;
  justify-content: space-between;
  margin: 0 4px 3px;
  border: 1px solid #e2e2e2;
  border-radius: 8px;
  background: #fff;
`;
const Article = styled.article`
  padding: 29px 0 0 54px;
  font-family: 'Liberation Sans', sans-serif;
  color: #111;
`;
const Paragraph = styled.p`
  margin: 0;
  font-size: 20px;
  line-height: 25px;
`;
const Heading = styled.h1`
  margin: 40px 0 0;
  font-size: 27px;
  font-weight: 400;
  line-height: 32px;
`;
const Banner = styled.a`
  display: flex;
  align-items: center;
  gap: 24px;
  height: 114px;
  margin-top: 46px;
  padding-top: 28px;
  background: linear-gradient(transparent 43px, #bc0505 43px, #bc0505 102px, transparent 102px);
  color: #fff;
  font-size: 41px;
  text-decoration: none;
  svg {
    margin-top: -28px;
  }
`;
const PageScroll = styled.div`
  display: flex;
  flex-direction: column;
  align-items: center;
  justify-content: space-between;
  width: 15px;
  padding: 10px 0;
`;
const PageThumb = styled.div`
  width: 9px;
  height: 302px;
  margin: auto 0 8px;
  border-radius: 5px;
  background: #8a8a8a;
`;

// Window placed behind
const BackFrame = styled.section`
  position: absolute;
  left: 283px;
  top: 14px;
  display: flex;
  flex-direction: column;
  width: 786px;
  height: 593px;
  border: 1px solid #999;
  background: #fff;
`;
const BackTitle = styled.div`
  display: flex;
  align-items: center;
  height: 30px;
  padding-left: 10px;
`;
const QuickBar = styled.div`
  display: flex;
  align-items: center;
  gap: 9px;
`;
const QuickLine = styled.span`
  width: 1px;
  height: 12px;
  background: #aaa;
`;
const QuickButton = styled.button`
  display: flex;
`;
const ManageTab = styled.div`
  width: 119px;
  height: 24px;
  margin-left: 125px;
  padding-top: 4px;
  background: #e9c9fb;
  color: #333;
  line-height: 20px;
  text-align: center;
`;
const BackCaption = styled.span`
  margin-left: 13px;
  color: #999;
  white-space: nowrap;
`;
const BackFileTab = styled.div`
  height: 23px;
  padding-left: 19px;
  background: #0063b1;
  color: #fff;
  line-height: 23px;
`;
const BackRibbon = styled.div`
  height: 93px;
  padding: 41px 8px;
  border-bottom: 1px solid #dadbdc;
  background: #f5f6f7;
  color: #777;
`;
const BackNav = styled.div`
  padding: 10px 12px;
`;
const BackBody = styled.div`
  flex: 1;
  padding-top: 241px;
`;
const BackSelected = styled.div`
  height: 24px;
  background: #d9d9d9;
`;
const BackStatus = styled.div`
  padding: 0 14px;
  color: #1e395b;
  line-height: 22px;
`;

// Window in front
const FrontFrame = styled.section`
  position: absolute;
  left: 309px;
  top: 40px;
  display: flex;
  flex-direction: column;
  width: 786px;
  border-left: 1px solid #fff;
  background: #fff;
`;
const FrontTitle = styled.div`
  display: flex;
  align-items: center;
  height: 31px;
  padding: 0 1px 0 10px;
`;
const FrontCaption = styled.span`
  margin-left: 5px;
`;
const RibbonTabs = styled.div`
  display: flex;
  height: 24px;
  border-bottom: 1px solid #dadbdc;
`;
const FileTab = styled.button`
  width: 56px;
  background: #0063b1;
  color: #fff;
`;
const RibbonTab = styled.button`
  width: ${(p) => (p.$active ? 58 : 57)}px;
  height: 24px;
  border: 1px solid ${(p) => (p.$active ? '#dadbdc' : 'transparent')};
  border-bottom: none;
  background: ${(p) => (p.$active ? '#f5f6f7' : 'none')};
  color: #333;
`;
const TabTools = styled.div`
  display: flex;
  align-items: center;
  gap: 9px;
  margin-left: auto;
  padding-right: 4px;
`;
const HelpButton = styled.button`
  width: 16px;
  height: 16px;
  border-radius: 50%;
  background: #0a62b5;
  color: #fff;
  font-weight: 700;
  line-height: 16px;
`;
const RibbonBar = styled.div`
  display: flex;
  height: 92px;
  padding-right: 26px;
  border-bottom: 1px solid #dadbdc;
  background: #f5f6f7;
`;
const Group = styled.div`
  flex: ${(p) => p.$grow} 1 0;
  display: flex;
  flex-direction: column;
  min-width: 0;
  border-right: 1px solid #e2e3e4;
`;
const GroupBody = styled.div`
  flex: 1;
  display: flex;
  padding-left: ${(p) => p.$inset || 0}px;
`;
const GroupLabel = styled.div`
  color: #444;
  line-height: 18px;
  text-align: center;
`;
const BigButton = styled.button`
  display: flex;
  flex-direction: column;
  align-items: center;
  justify-content: flex-start;
  width: ${(p) => p.$width}px;
  height: 72px;
  color: ${(p) => (p.$dim ? '#777' : '#222')};
  line-height: 13px;
  white-space: nowrap;
`;
const BigGlyph = styled.span`
  display: flex;
  align-items: center;
  justify-content: center;
  height: 36px;
  margin: 4px 0 2px;
`;
const DropRow = styled.span`
  display: flex;
  justify-content: center;
  padding-top: 5px;
`;
const Stack = styled.div`
  display: flex;
  flex-direction: column;
  gap: ${(p) => (p.$tall ? 7 : 0)}px;
  padding-top: ${(p) => (p.$tall ? 12 : 4)}px;
`;
const SmallButton = styled.button`
  display: flex;
  align-items: center;
  gap: 3px;
  height: 22px;
  color: ${(p) => (p.$dim ? '#777' : '#222')};
  white-space: nowrap;
`;
const SmallGlyph = styled.span`
  display: flex;
  justify-content: center;
  width: 16px;
`;
const InnerLine = styled.span`
  width: 1px;
  height: 58px;
  margin: 8px 8px 0;
  background: #e2e3e4;
`;
const AddressRow = styled.div`
  display: flex;
  align-items: center;
  height: 35px;
  padding: 0 13px 2px 5px;
`;
const NavButton = styled.button`
  display: flex;
  align-items: center;
  justify-content: center;
  width: ${(p) => (p.$narrow ? 21 : 29)}px;
`;
const PathBox = styled.div`
  flex: 1;
  display: flex;
  align-items: center;
  height: 22px;
  margin-left: 1px;
  padding-left: 4px;
  border: 1px solid #d9d9d9;
`;
const Guillemet = styled.span`
  padding: 0 1px 0 6px;
  color: #444;
  font-size: 13px;
`;
const Crumb = styled.button`
  padding: 0 8px;
`;
const LocalCrumb = styled.button`
  display: flex;
  align-items: center;
  height: 20px;
  border: 1px solid #99d1ff;
  background: #cce8ff;
  span {
    padding: 0 5px;
  }
  i {
    display: flex;
    align-items: center;
    height: 18px;
    padding: 0 2px;
    border-left: 1px solid #99d1ff;
  }
`;
const TempCrumb = styled.button`
  padding: 0 7px 0 4px;
`;
const PathEnd = styled.div`
  display: flex;
  align-items: center;
  gap: 3px;
  margin-left: auto;
`;
const RefreshCell = styled.button`
  display: flex;
  align-items: center;
  justify-content: center;
  width: 17px;
  height: 20px;
  border-left: 1px solid #d9d9d9;
`;
const SearchBox = styled.label`
  display: flex;
  align-items: center;
  width: 202px;
  height: 22px;
  margin-left: 12px;
  padding: 0 8px;
  border: 1px solid #d9d9d9;
  color: #666;
`;
const SearchInput = styled.input`
  flex: 1;
  min-width: 0;
  &::placeholder {
    color: #555;
    opacity: 1;
  }
`;
const Panes = styled.div`
  display: flex;
  height: 387px;
`;
const Tree = styled.div`
  width: 139px;
  padding-top: 100px;
  overflow: hidden;
`;
const TreeTop = styled.div`
  height: 68px;
  overflow: hidden;
`;
const TreeItem = styled.div`
  display: flex;
  align-items: center;
  gap: 6px;
  height: 24px;
  padding-left: 82px;
  background: ${(p) => (p.$active ? '#d9d9d9' : '#fff')};
  white-space: nowrap;
`;
const TreeScroll = styled.div`
  display: flex;
  flex-direction: column;
  align-items: center;
  justify-content: space-between;
  width: 16px;
  margin: 0 1px;
  padding: 4px 0;
  background: #f0f0f0;
`;
const TreeThumb = styled.div`
  width: 16px;
  height: 49px;
  margin: 142px 0 auto;
  background: #cdcdcd;
`;
const Listing = styled.div`
  flex: 1;
`;
const Files = styled.table`
  width: 100%;
  border-collapse: collapse;
  table-layout: fixed;
`;
const Head = styled.th`
  width: ${(p) => p.$width}px;
  height: 26px;
  padding: 0 6px;
  border-right: 1px solid #e5e5e5;
  color: #43576f;
  font-weight: 400;
  text-align: left;
`;
const NameHead = styled(Head)`
  position: relative;
  width: 274px;
  padding-left: 20px;
`;
const HeadMark = styled.span`
  position: absolute;
  left: 140px;
  top: -2px;
`;
const Spacer = styled.td`
  width: auto;
`;
const Working = styled.td`
  padding: 14px 0;
  color: #555;
  text-align: center;
`;
const StatusBar = styled.div`
  display: flex;
  align-items: center;
  justify-content: space-between;
  height: 23px;
  padding: 0 5px 0 14px;
  color: #1e395b;
`;
const Views = styled.div`
  display: flex;
`;
const ViewButton = styled.button`
  display: flex;
  align-items: center;
  justify-content: center;
  width: 22px;
  height: 23px;
  border: 1px solid ${(p) => (p.$active ? '#4aa5d8' : 'transparent')};
  background: ${(p) => (p.$active ? '#cdeafb' : 'none')};
`;

const Mark = styled.div`
  position: absolute;
  right: 46px;
  bottom: 47px;
  display: flex;
  align-items: center;
  color: #fff;
  font-family: 'Liberation Sans Narrow', 'Liberation Sans', sans-serif;
  font-size: 32px;
  opacity: 0.8;
  filter: drop-shadow(0 0 2px #999);
`;

// Taskbar
const Bar = styled.footer`
  display: flex;
  height: 40px;
  background: linear-gradient(90deg, #00161f, #00121f 50%, #000a1e);
  color: #fff;
`;
const StartButton = styled.button`
  display: flex;
  align-items: center;
  justify-content: center;
  width: 48px;
`;
const TaskSearch = styled.label`
  display: flex;
  align-items: center;
  gap: 11px;
  width: 288px;
  padding: 0 4px 0 12px;
  border: 1px solid #ccc;
  background: #f2f2f2;
  color: #222;
  font-size: 14px;
`;
const TaskButton = styled.button`
  display: flex;
  align-items: center;
  justify-content: center;
  width: 47px;
  margin: 0 1px;
  background: linear-gradient(#76b9ed, #76b9ed) bottom / ${(p) => p.$line || 0}px 2px no-repeat
    ${(p) => (p.$active ? '#33464f' : 'transparent')};
`;
const Tray = styled.div`
  display: flex;
  align-items: center;
  margin-left: auto;
`;
const TrayButton = styled.button`
  display: flex;
  align-items: center;
  justify-content: center;
  width: 24px;
  height: 40px;
`;
const Clock = styled.div`
  width: 64px;
  line-height: 18px;
  text-align: center;
`;
const NoticeButton = styled(TrayButton)`
  width: 40px;
`;
const ShowDesktop = styled.button`
  width: 5px;
  height: 40px;
  margin-left: 8px;
  border-left: 1px solid #59616b;
`;
